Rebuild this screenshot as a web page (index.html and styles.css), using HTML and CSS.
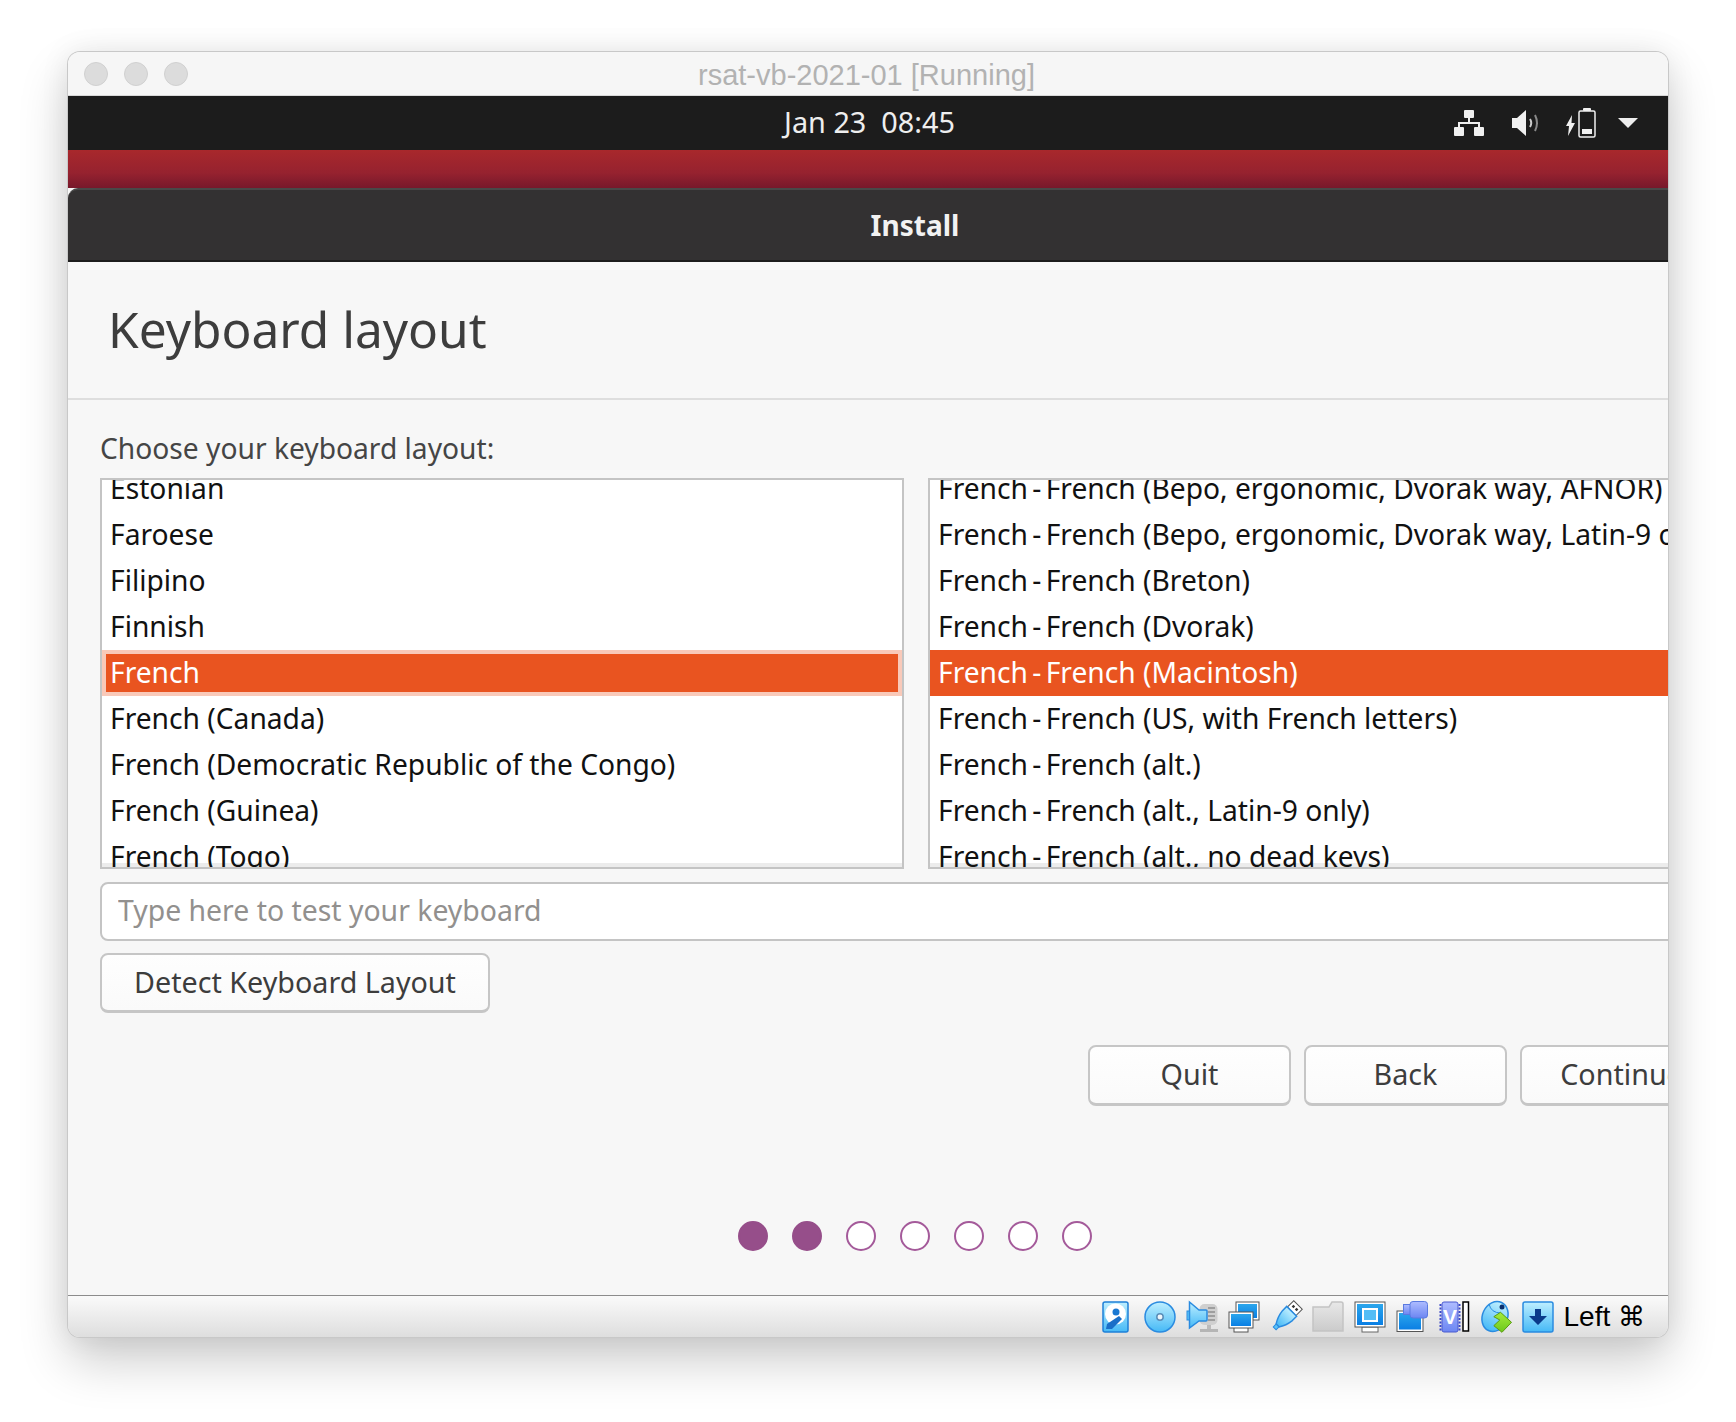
FILE: index.html
```html
<!DOCTYPE html>
<html lang="en">
<head>
    <meta charset="UTF-8">
    <meta name="viewport" content="width=device-width, initial-scale=1.0">
    <title>rsat-vb-2021-01 [Running]</title>
    <link rel="stylesheet" href="styles.css">
</head>
<body>
    <!-- shared gradients for the status bar icons -->
    <svg class="defs" width="0" height="0" aria-hidden="true">
        <defs>
            <linearGradient id="gBlue" x1="0" y1="0" x2="0" y2="1"><stop offset="0" stop-color="#bfefff"/><stop offset="1" stop-color="#45b9f6"/></linearGradient>
            <linearGradient id="gDeep" x1="0" y1="0" x2="0" y2="1"><stop offset="0" stop-color="#2ba6ec"/><stop offset="1" stop-color="#0a7fe4"/></linearGradient>
            <linearGradient id="gPeri" x1="0" y1="0" x2="0" y2="1"><stop offset="0" stop-color="#aebcff"/><stop offset="1" stop-color="#6c86f2"/></linearGradient>
            <linearGradient id="gGray" x1="0" y1="0" x2="0" y2="1"><stop offset="0" stop-color="#e8e8e8"/><stop offset="1" stop-color="#cbcbcb"/></linearGradient>
            <linearGradient id="gGreen" x1="0" y1="0" x2="0" y2="1"><stop offset="0" stop-color="#a4ec3c"/><stop offset="1" stop-color="#6cc81c"/></linearGradient>
        </defs>
    </svg>

    <div class="window">
        <div class="titlebar">
            <div class="lights"><span></span><span></span><span></span></div>
            <div class="title">rsat-vb-2021-01 [Running]</div>
        </div>

        <div class="guest">
            <div class="panel">
                <div></div>
                <div class="clock">Jan 23&nbsp; 08:45</div>
                <div class="tray">
                    <svg width="30" height="26" viewBox="0 0 30 26" fill="#f0f0f0">
                        <rect x="10" y="0" width="10" height="8" rx="1"/>
                        <rect x="14" y="8" width="2" height="5"/>
                        <rect x="4" y="12" width="22" height="2"/>
                        <rect x="4" y="12" width="2" height="6"/>
                        <rect x="24" y="12" width="2" height="6"/>
                        <rect x="0" y="17" width="10" height="9" rx="1"/>
                        <rect x="20" y="17" width="10" height="9" rx="1"/>
                    </svg>
                    <svg width="34" height="28" viewBox="0 0 34 28">
                        <path d="M6 9H11L20 1V27L11 19H6Z" fill="#f0f0f0"/>
                        <path d="M24 10Q26.500 14 24 18" fill="none" stroke="#ccc" stroke-width="2"/>
                        <path d="M29 6Q33 14 29 22" fill="none" stroke="#8a8a8a" stroke-width="2"/>
                    </svg>
                    <svg width="34" height="30" viewBox="0 0 34 30" fill="#f0f0f0">
                        <path d="M10 7L4 18H7L6 28L13 15H9.500Z"/>
                        <rect x="17" y="3" width="16" height="26" rx="1.500" fill="none" stroke="#f0f0f0" stroke-width="1.500"/>
                        <rect x="21" y="0" width="8" height="3" rx="1"/>
                        <rect x="20" y="21" width="10" height="5"/>
                    </svg>
                    <span class="caret"></span>
                </div>
            </div>
            <div class="wallpaper"></div>

            <div class="installer">
                <div class="install-title">Install</div>
                <div class="page-head">
                    <h1>Keyboard layout</h1>
                </div>
                <div class="page-body">
                    <div class="choose">Choose your keyboard layout:</div>
                    <div class="lists">
                        <div class="list">
                            <ul>
                                <li>Estonian</li>
                                <li>Faroese</li>
                                <li>Filipino</li>
                                <li>Finnish</li>
                                <li class="picked">French</li>
                                <li>French (Canada)</li>
                                <li>French (Democratic Republic of the Congo)</li>
                                <li>French (Guinea)</li>
                                <li>French (Togo)</li>
                            </ul>
                        </div>
                        <div class="list list-right">
                            <ul>
                                <li>French <span class="sep">-</span> French (Bepo, ergonomic, Dvorak way, AFNOR)</li>
                                <li>French <span class="sep">-</span> French (Bepo, ergonomic, Dvorak way, Latin-9 only)</li>
                                <li>French <span class="sep">-</span> French (Breton)</li>
                                <li>French <span class="sep">-</span> French (Dvorak)</li>
                                <li class="picked">French <span class="sep">-</span> French (Macintosh)</li>
                                <li>French <span class="sep">-</span> French (US, with French letters)</li>
                                <li>French <span class="sep">-</span> French (alt.)</li>
                                <li>French <span class="sep">-</span> French (alt., Latin-9 only)</li>
                                <li>French <span class="sep">-</span> French (alt., no dead keys)</li>
                            </ul>
                        </div>
                    </div>
                    <input class="test-input" type="text" placeholder="Type here to test your keyboard">
                    <button class="btn btn-detect">Detect Keyboard Layout</button>
                    <div class="actions">
                        <button class="btn btn-step">Quit</button>
                        <button class="btn btn-step">Back</button>
                        <button class="btn btn-step">Continue</button>
                    </div>
                    <div class="dots">
                        <span class="dot on"></span>
                        <span class="dot on"></span>
                        <span class="dot"></span>
                        <span class="dot"></span>
                        <span class="dot"></span>
                        <span class="dot"></span>
                        <span class="dot"></span>
                    </div>
                </div>
            </div>
        </div>

        <div class="statusbar">
            <!-- hard disk -->
            <svg class="sicon" viewBox="0 0 32 32">
                <rect x="1" y="1" width="25" height="30" rx="2" fill="url(#gBlue)" stroke="#1e80d8" stroke-width="1.500"/>
                <circle cx="13.500" cy="13" r="10.500" fill="#fff"/>
                <circle cx="14" cy="11" r="3.500" fill="#1a78d2"/>
                <path d="M4 28L5 23L17 15L20 18L10 28Z" fill="#1a6fc8"/>
            </svg>
            <!-- optical disk -->
            <svg class="sicon" viewBox="0 0 32 32">
                <circle cx="16" cy="16" r="15" fill="url(#gBlue)" stroke="#2a8be0" stroke-width="1.500"/>
                <circle cx="16" cy="16" r="3.200" fill="#eef6fb" stroke="#5a8db8" stroke-width="1.500"/>
            </svg>
            <!-- audio -->
            <svg class="sicon" viewBox="0 0 32 32">
                <rect x="13.500" y="3" width="18" height="21" rx="5" fill="#cfcfcf"/>
                <path d="M22 7H29M22 11H29M22 15H29M22 19H29" stroke="#8f8f8f" stroke-width="1.500"/>
                <rect x="21" y="24" width="4" height="4" fill="#bbb"/>
                <rect x="14" y="28" width="18" height="3" fill="#b5b5b5"/>
                <rect x="1" y="10" width="3" height="9" fill="#5cc4f8" stroke="#2a8be0"/>
                <path d="M3.500 1L13 9H20Q21 9 21 10V19Q21 20 20 20H13L3.500 27Z" fill="url(#gBlue)" stroke="#2a8be0" stroke-width="1.500"/>
            </svg>
            <!-- network -->
            <svg class="sicon" viewBox="0 0 32 32">
                <rect x="8" y="1" width="23" height="18" fill="#fff" stroke="#555"/>
                <rect x="10" y="3" width="19" height="14" fill="url(#gDeep)"/>
                <rect x="6" y="26" width="14" height="5" fill="#fff" stroke="#555"/>
                <rect x="1" y="11" width="24" height="16" fill="#fff" stroke="#555"/>
                <rect x="3" y="13" width="20" height="12" fill="url(#gDeep)"/>
            </svg>
            <!-- usb -->
            <svg class="sicon" viewBox="0 0 32 32">
                <g transform="rotate(45 16 16)">
                    <rect x="10" y="-1" width="12" height="9" fill="#fff" stroke="#555"/>
                    <rect x="12.500" y="2" width="2.500" height="2.500" fill="#333"/>
                    <rect x="17" y="2" width="2.500" height="2.500" fill="#333"/>
                    <path d="M9 8H23V14Q22 22 18 28H14Q10 22 9 14Z" fill="url(#gBlue)" stroke="#2a8be0" stroke-width="1.500"/>
                    <rect x="14" y="28" width="4" height="4" fill="#5cc4f8" stroke="#2a8be0"/>
                </g>
            </svg>
            <!-- shared folders -->
            <svg class="sicon" viewBox="0 0 32 32">
                <path d="M1 6H17L20 1H29Q31 1 31 3V30H1Z" fill="url(#gGray)" stroke="#c4c4c4" stroke-width="1.500"/>
            </svg>
            <!-- display -->
            <svg class="sicon" viewBox="0 0 32 32">
                <rect x="8" y="26" width="16" height="5" fill="#fff" stroke="#666"/>
                <rect x="1" y="1" width="30" height="25" fill="#fff" stroke="#555"/>
                <rect x="3" y="3" width="26" height="21" fill="url(#gDeep)"/>
                <rect x="9" y="8" width="14" height="12" fill="#52bdf6" stroke="#fff" stroke-width="2"/>
            </svg>
            <!-- recording -->
            <svg class="sicon" viewBox="0 0 32 32">
                <rect x="1" y="10" width="26" height="20.500" fill="#fff" stroke="#555"/>
                <rect x="3" y="12" width="22" height="16.500" fill="url(#gDeep)"/>
                <rect x="7.500" y="3.500" width="7" height="10" fill="url(#gPeri)" stroke="#5a7ae0"/>
                <rect x="14" y="0.500" width="17.500" height="16.500" rx="3" fill="url(#gPeri)" stroke="#5a7ae0"/>
            </svg>
            <!-- vt-x chip and host cursor bar -->
            <svg class="sicon" viewBox="0 0 32 32">
                <path d="M2.500 3V30M21.500 3V30" stroke="#3a48c8" stroke-width="2" stroke-dasharray="2 1.500"/>
                <rect x="4" y="1" width="16" height="30" rx="2" fill="url(#gPeri)" stroke="#4a5ad0"/>
                <text class="chip-v" x="12" y="23">V</text>
                <rect x="25" y="1" width="5.500" height="29" fill="#fff" stroke="#000" stroke-width="1.500"/>
            </svg>
            <!-- mouse integration -->
            <svg class="sicon" viewBox="0 0 32 32">
                <ellipse cx="15" cy="15.500" rx="12.500" ry="15.500" transform="rotate(25 15 15.500)" fill="url(#gBlue)" stroke="#2a8be0" stroke-width="1.500"/>
                <path d="M9 3Q11 12 21 12" fill="none" stroke="#2a8be0"/>
                <circle cx="22" cy="6" r="2.500" fill="#0b2f6e"/>
                <path d="M20.500 11.300L31.500 21.300L22 31.300L13.800 24.700L19.800 19L13.800 15.700Z" fill="url(#gGreen)" stroke="#5a9a10"/>
            </svg>
            <!-- keyboard capture -->
            <svg class="sicon" viewBox="0 0 32 32">
                <rect x="1" y="1" width="30" height="30" rx="2" fill="url(#gBlue)" stroke="#2a8be0" stroke-width="1.500"/>
                <path d="M13 8H19V15H25L16 24L7 15H13Z" fill="#0a3a8a"/>
            </svg>
            <div class="host-key">Left <span class="cmd">⌘</span></div>
        </div>
    </div>
</body>
</html>
```

FILE: styles.css
```css
html, body {
    height: 100%;
}

body {
    margin: 0;
    padding: 52px 68px 0;
    box-sizing: border-box;
    background-color: #fff;
    font-family: "Noto Sans", sans-serif;
    overflow: hidden;
}

.defs {
    position: absolute;
}

.window {
    display: flex;
    flex-direction: column;
    width: 1600px;
    height: 1285px;
    border-radius: 12px;
    overflow: hidden;
    background-color: #f7f7f7;
    box-shadow: 0 0 0 1px #c8c8c8, 0 24px 50px rgba(0, 0, 0, 0.2), 0 0 30px rgba(0, 0, 0, 0.08);
}

.titlebar {
    display: grid;
    grid-template-columns: 1fr auto 1fr;
    align-items: center;
    flex: none;
    height: 43px;
    padding-left: 16px;
    background-color: #f6f6f6;
    border-bottom: 1px solid #d8d8d8;
}

.lights {
    display: flex;
    gap: 16px;
}

.lights span {
    box-sizing: border-box;
    width: 24px;
    height: 24px;
    border-radius: 50%;
    background-color: #dcdcdc;
    border: 1px solid #d0d0d0;
}

.title {
    padding-top: 3px;
    font-family: "Liberation Sans", sans-serif;
    font-size: 29px;
    color: #b2b2b2;
    margin-left: -19px;
}

.guest {
    flex: 1;
    min-height: 0;
    overflow: hidden;
}

.panel {
    display: grid;
    grid-template-columns: 1fr auto 1fr;
    align-items: center;
    height: 54px;
    padding-right: 30px;
    background-color: #1c1c1c;
    color: #eee;
}

.clock {
    font-size: 28.8px;
    margin-left: 33px;
    margin-bottom: 4px;
}

.tray {
    display: flex;
    justify-content: flex-end;
    align-items: center;
    gap: 22px;
}

.caret {
    width: 0;
    height: 0;
    border-left: 10px solid transparent;
    border-right: 10px solid transparent;
    border-top: 10px solid #eee;
}

.wallpaper {
    height: 38px;
    background: linear-gradient(#a8282c, #96222f 60%, #77182b);
}

.installer {
    width: 1694px;
    background: #f7f7f7;
}

.install-title {
    box-sizing: border-box;
    height: 74px;
    line-height: 70px;
    text-align: center;
    font-size: 28px;
    font-weight: 700;
    color: #f2f2f2;
    background-color: #333132;
    border-top: 2px solid #484848;
    border-bottom: 2px solid #1c1c1c;
    border-top-left-radius: 10px;
}

.page-head {
    display: flex;
    align-items: center;
    box-sizing: content-box;
    height: 134px;
    padding: 0 0 2px 40px;
    border-bottom: 2px solid #dedede;
}

h1 {
    margin: 0;
    font-size: 49.6px;
    font-weight: 400;
    color: #3d3d3d;
}

.page-body {
    padding: 29px 39px 0 32px;
}

.choose {
    height: 38px;
    line-height: 38px;
    margin-bottom: 11px;
    font-size: 28.2px;
    color: #454545;
}

.lists {
    display: grid;
    grid-template-columns: 804px 795px;
    column-gap: 24px;
}

.list {
    box-sizing: border-box;
    height: 391px;
    overflow: hidden;
    background-color: #fff;
    border: 2px solid #c4c4c4;
    box-shadow: inset 0 -4px 0 #ececec;
}

.list ul {
    list-style: none;
    margin: -14px 0 0;
    padding: 0;
}

.list li {
    box-sizing: border-box;
    height: 46px;
    line-height: 45px;
    padding-left: 8px;
    font-size: 28.2px;
    color: #111;
    white-space: nowrap;
}

.list li.picked {
    line-height: 37px;
    padding-left: 4px;
    color: #fff;
    background-color: #e95420;
    border: 4px solid #f9c9b9;
}

.list-right li {
    padding-left: 8px;
}

.list-right li.picked {
    line-height: 45px;
    padding-left: 8px;
    border: 0;
}

.sep {
    margin: 0 -3px;
}

.test-input {
    display: block;
    box-sizing: border-box;
    width: 100%;
    height: 59px;
    margin-top: 13px;
    padding: 0 16px 4px;
    background-color: #fff;
    border: 2px solid #c4c4c4;
    border-radius: 8px;
    outline: none;
    font-family: inherit;
    font-size: 28.4px;
}

.test-input::placeholder {
    color: #92908e;
    opacity: 1;
}

.btn {
    box-sizing: border-box;
    height: 60px;
    padding: 0 0 3px;
    background: linear-gradient(#fefefe, #fafafa);
    border: 2px solid #c6c6c6;
    border-bottom-width: 3px;
    border-radius: 8px;
    font-family: inherit;
    font-size: 28.7px;
    color: #3d3d3d;
}

.btn-detect {
    display: block;
    width: 390px;
    margin-top: 12px;
}

.actions {
    display: flex;
    justify-content: flex-end;
    gap: 13px;
    margin-top: 32px;
}

.btn-step {
    width: 203px;
    height: 61px;
}

.dots {
    display: flex;
    justify-content: center;
    gap: 24px;
    margin-top: 115px;
    padding-left: 6px;
}

.dot {
    box-sizing: border-box;
    width: 30px;
    height: 30px;
    border-radius: 50%;
    background-color: #fff;
    border: 2px solid #a45a9a;
}

.dot.on {
    background-color: #964e8a;
    border-color: #964e8a;
}

.statusbar {
    display: flex;
    align-items: center;
    justify-content: flex-end;
    flex: none;
    gap: 10px;
    box-sizing: border-box;
    height: 42px;
    padding: 0 23px 0 0;
    background: linear-gradient(#fafafa, #dedede);
    border-top: 1px solid #8c8c8c;
}

.sicon {
    flex: none;
    width: 32px;
    height: 32px;
    overflow: visible;
}

.chip-v {
    font-family: "Liberation Sans", sans-serif;
    font-size: 21px;
    font-weight: 700;
    fill: #fff;
    text-anchor: middle;
}

.host-key {
    font-family: "Liberation Sans", sans-serif;
    font-size: 28px;
    color: #000;
    white-space: nowrap;
}

.cmd {
    font-family: "DejaVu Sans", sans-serif;
    font-size: 27px;
}
```
